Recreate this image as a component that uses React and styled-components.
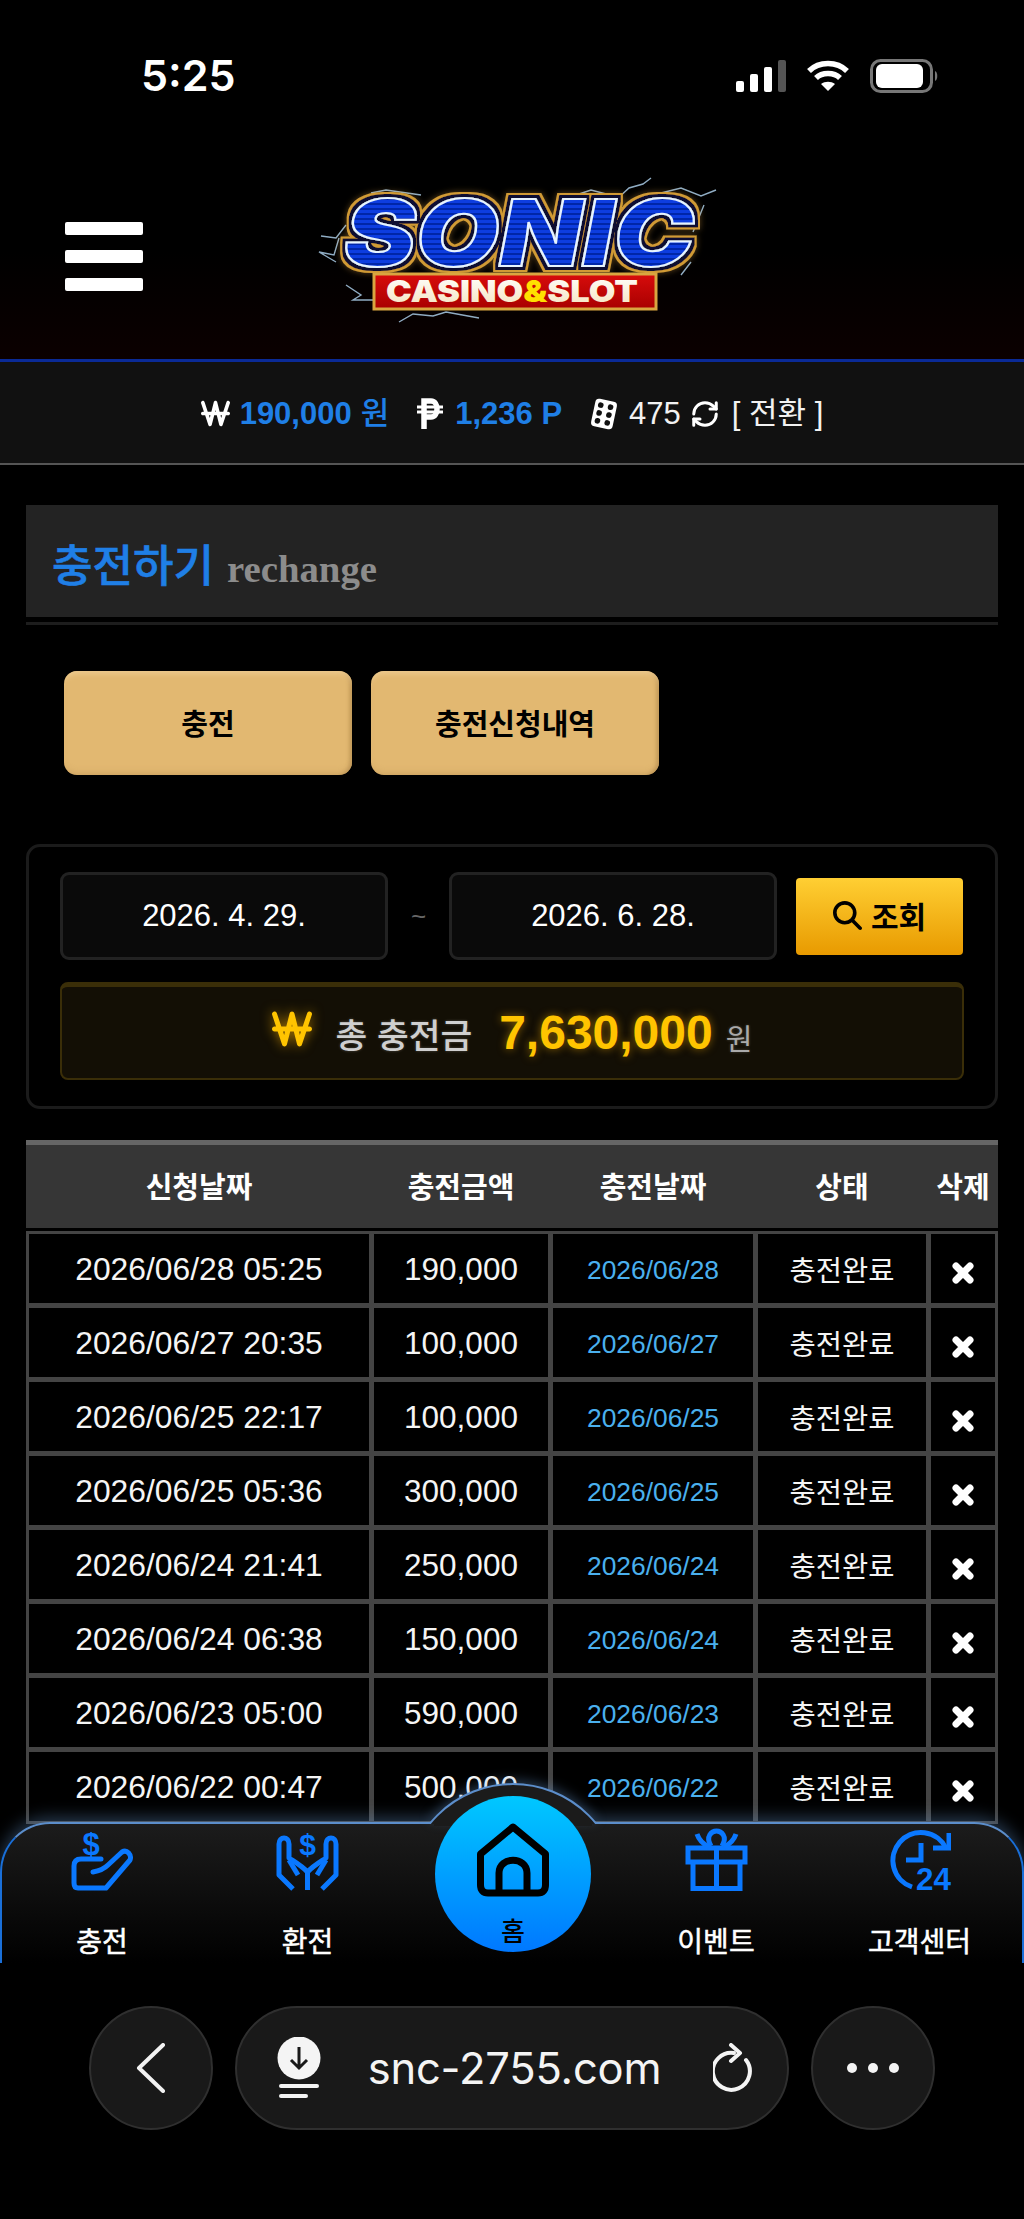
import React from "react";
import styled, { createGlobalStyle } from "styled-components";
import { FaWonSign, FaMagnifyingGlass } from "react-icons/fa6";
import { RefreshCw } from "lucide-react";

const SANS = `"Liberation Sans", "Noto Sans CJK KR", sans-serif`;

const GlobalStyle = createGlobalStyle`
  html, body { margin: 0; padding: 0; background: #000; }
  * { box-sizing: border-box; }
  body { font-family: ${SANS}; color: #fff; }
`;

const Page = styled.div`
  width: 1024px;
  height: 2219px;
  overflow: hidden;
  display: flex;
  flex-direction: column;
  background: #000;
`;
const WebView = styled.div`
  position: relative;
  height: 1963px;
  flex: none;
  overflow: hidden;
`;

/* status bar + logo header */
const Header = styled.header`
  height: 359px;
  background: linear-gradient(#000 70%, #0b0000 100%);
`;
const StatusBar = styled.div`
  height: 140px;
  padding: 50px 85px 0 141px;
  display: flex;
  justify-content: space-between;
  align-items: flex-start;
`;
const Time = styled.div`
  font-family: Inter, sans-serif;
  font-weight: 600;
  font-size: 43px;
  line-height: 50px;
`;
const StatusIcons = styled.div`
  display: flex;
  align-items: center;
  gap: 20px;
  padding-top: 9px;
`;
const TopRow = styled.div`
  display: grid;
  grid-template-columns: 1fr 420px 1fr;
  align-items: start;
`;
const MenuButton = styled.div`
  margin: 82px 0 0 65px;
  width: 78px;
  display: flex;
  flex-direction: column;
  gap: 15px;
`;
const MenuBar = styled.span`
  height: 13px;
  background: #fff;
  border-radius: 2px;
`;
const Logo = styled.svg`
  display: block;
  margin-top: 30px;
`;

/* balance strip */
const Stats = styled.div`
  height: 106px;
  border-top: 3px solid #0a2a96;
  border-bottom: 2px solid #555;
  background: #111;
  display: flex;
  align-items: center;
  justify-content: center;
  font-size: 31px;
  line-height: 40px;
  padding-top: 2px;
`;
const StatIcon = styled.span`
  display: inline-flex;
  color: #fff;
  margin-right: ${(p) => p.$gap || 10}px;
`;
const StatValue = styled.b`
  color: #1f7fe6;
  font-weight: 700;
  margin-right: ${(p) => p.$gap || 28}px;
  white-space: nowrap;
`;
const StatUnit = styled.span`
  font-weight: 500;
  margin-left: 9px;
`;
const StatText = styled.span`
  color: #f2f2f2;
  white-space: nowrap;
  margin-right: ${(p) => p.$gap || 0}px;
`;

/* page body */
const Content = styled.main`
  padding: 40px 26px 0;
`;
const TitleWrap = styled.div`
  padding-bottom: 5px;
  border-bottom: 3px solid #1d1d1d;
`;
const TitleBox = styled.div`
  height: 112px;
  background: #232323;
  padding: 22px 26px 0;
  display: flex;
  align-items: center;
  gap: 13px;
`;
const TitleMain = styled.h1`
  margin: 0;
  font-size: 44px;
  font-weight: 500;
  -webkit-text-stroke: 0.6px #1f7fe6;
  color: #1f7fe6;
  white-space: nowrap;
  position: relative;
  top: -9px;
`;
const TitleSub = styled.span`
  font-family: "Liberation Serif", serif;
  font-weight: 700;
  font-size: 38.8px;
  color: #8c8c8c;
  position: relative;
  top: -4px;
`;
const Tabs = styled.div`
  display: flex;
  gap: 19px;
  padding: 46px 0 0 38px;
`;
const TabButton = styled.div`
  width: 288px;
  height: 104px;
  border-radius: 13px;
  background: #e2b871;
  box-shadow: inset 0 6px 6px -4px #f1d097, inset 0 -6px 6px -3px #b8905250,
    inset -4px 0 4px -2px #b89052;
  display: flex;
  align-items: center;
  justify-content: center;
  color: #000;
  font-size: 29px;
  font-weight: 700;
  padding-bottom: 2px;
`;
const SearchPanel = styled.section`
  margin-top: 69px;
  height: 265px;
  border: 3px solid #1b1b1b;
  border-radius: 14px;
  padding: 25px 31px;
`;
const SearchRow = styled.div`
  display: flex;
  align-items: center;
`;
const DateField = styled.div`
  width: 328px;
  height: 88px;
  background: #0a0a0a;
  border: 3px solid #222;
  border-radius: 9px;
  display: flex;
  align-items: center;
  justify-content: center;
  font-size: 31px;
`;
const Tilde = styled.span`
  width: 61px;
  text-align: center;
  color: #666;
  font-size: 26px;
`;
const SearchButton = styled.div`
  width: 167px;
  height: 77px;
  margin-left: 19px;
  border-radius: 4px;
  background: linear-gradient(#ffcf33, #e89a00);
  color: #000;
  font-size: 30px;
  font-weight: 700;
  display: flex;
  align-items: center;
  justify-content: center;
  gap: 9px;
  padding-bottom: 2px;
`;
const TotalBar = styled.div`
  margin-top: 22px;
  width: 904px;
  height: 98px;
  border: 2px solid #3a2e08;
  border-top-width: 5px;
  border-radius: 8px;
  background: #130f05;
  display: flex;
  align-items: center;
  justify-content: center;
`;
const WonMark = styled.span`
  display: inline-flex;
  color: #ffc400;
  margin: -8px 24px 0 0;
  filter: drop-shadow(0 0 6px #ffb40099);
`;
const TotalLabel = styled.span`
  color: #cfcfcf;
  font-size: 34.5px;
  font-weight: 500;
  margin-right: 27px;
  text-shadow: 0 0 3px #ffffff40;
`;
const TotalValue = styled.b`
  color: #ffc400;
  font-size: 48px;
  text-shadow: 0 0 8px #ffb40080;
`;
const TotalUnit = styled.span`
  color: #aaa;
  font-size: 29px;
  margin: 8px 0 0 13px;
  text-shadow: 0 0 3px #ffffff40;
`;

/* history table */
const COLUMNS = "340px 174px 200px 168px 64px";

const TableHead = styled.div`
  margin-top: 31px;
  height: 88px;
  border-top: 5px solid #666;
  background: #363636;
  padding: 0 3px 4px;
  display: grid;
  grid-template-columns: ${COLUMNS};
  column-gap: 5px;
  align-items: center;
  text-align: center;
  font-size: 29px;
  font-weight: 700;
`;
const TableBody = styled.div`
  margin-top: 3px;
  padding: 3px;
  background: #444;
  display: grid;
  grid-template-columns: ${COLUMNS};
  grid-auto-rows: 69px;
  gap: 5px;
`;
const Cell = styled.div`
  background: #000;
  display: flex;
  align-items: center;
  justify-content: center;
  white-space: nowrap;
  font-size: ${(p) => p.$size || 31.5}px;
  color: ${(p) => p.$color || "#f5f5f5"};
  padding-top: ${(p) => p.$drop ?? 1}px;
`;

/* bottom navigation */
const BottomNav = styled.nav`
  position: absolute;
  left: 0;
  right: 0;
  bottom: 0;
  height: 141px;
  border: 2px solid #1a6fd8;
  border-top-color: #5c8ecb;
  border-bottom: none;
  border-radius: 50px 50px 0 0;
  background: linear-gradient(#1c1c1c, #000);
  box-shadow: 0 -5px 16px rgba(110, 160, 220, 0.35);
  display: grid;
  grid-template-columns: repeat(5, 1fr);
`;
const NavItem = styled.div`
  display: flex;
  flex-direction: column;
  align-items: center;
  padding-top: 4px;
  font-size: 28px;
  font-weight: 400;
  -webkit-text-stroke: 0.5px #fff;
  gap: 32px;
  line-height: 40px;
  white-space: nowrap;
  margin-left: ${(p) => p.$shift || 0}px;
`;
/* round bump over the bar: a clipped circle */
const Bump = styled.div`
  position: absolute;
  left: 426px;
  top: -41px;
  width: 170px;
  height: 41px;
  overflow: hidden;
  filter: drop-shadow(0 -3px 6px rgba(110, 160, 220, 0.35));
`;
const BumpCircle = styled.div`
  width: 216px;
  height: 216px;
  margin-left: -23px;
  border-radius: 50%;
  background: #1b1b1b;
  border: 2px solid #5c8ecb;
`;
const BumpFill = styled.div`
  position: absolute;
  left: 432px;
  top: -2px;
  width: 158px;
  height: 4px;
  background: #1b1b1b;
`;
const HomeButton = styled.div`
  position: absolute;
  left: 433px;
  top: -28px;
  width: 156px;
  height: 156px;
  border-radius: 50%;
  background: linear-gradient(#00c8ff, #0078ff);
  color: #000;
  font-size: 26px;
  font-weight: 500;
  display: flex;
  flex-direction: column;
  align-items: center;
  padding-top: 27px;
  line-height: 30px;
  gap: 20px;
`;

/* browser chrome */
const BrowserBar = styled.div`
  display: flex;
  justify-content: center;
  gap: 22px;
  padding-top: 43px;
`;
const RoundButton = styled.div`
  width: 124px;
  height: 124px;
  border-radius: 50%;
  background: #191919;
  border: 2px solid #2f2f2f;
  display: flex;
  align-items: center;
  justify-content: center;
`;
const AddressPill = styled.div`
  width: 554px;
  height: 124px;
  border-radius: 62px;
  background: #191919;
  border: 2px solid #2f2f2f;
  display: flex;
  align-items: center;
  justify-content: space-between;
  padding: 0 32px 0 39px;
`;
const UrlText = styled.span`
  font-family: Inter, sans-serif;
  font-size: 43.5px;
  letter-spacing: -0.2px;
  color: #f4f4f4;
  margin-right: 6px;
`;

const ROWS = [
  ["2026/06/28 05:25", "190,000", "2026/06/28"],
  ["2026/06/27 20:35", "100,000", "2026/06/27"],
  ["2026/06/25 22:17", "100,000", "2026/06/25"],
  ["2026/06/25 05:36", "300,000", "2026/06/25"],
  ["2026/06/24 21:41", "250,000", "2026/06/24"],
  ["2026/06/24 06:38", "150,000", "2026/06/24"],
  ["2026/06/23 05:00", "590,000", "2026/06/23"],
  ["2026/06/22 00:47", "500,000", "2026/06/22"],
];

const HEADS = ["신청날짜", "충전금액", "충전날짜", "상태", "삭제"];

const SignalIcon = () => (
  <svg width="50" height="32" viewBox="0 0 50 32">
    <rect x="0" y="21" width="8" height="11" rx="2" fill="#fff" />
    <rect x="14" y="14" width="8" height="18" rx="2" fill="#fff" />
    <rect x="28" y="7" width="8" height="25" rx="2" fill="#fff" />
    <rect x="42" y="0" width="8" height="32" rx="2" fill="#555" />
  </svg>
);

const WifiIcon = () => (
  <svg width="44" height="32" viewBox="0 0 44 32" fill="none" stroke="#fff" strokeWidth="5.5">
    <path d="M3 11 C13 1 31 1 41 11" />
    <path d="M10 18 C16 12 28 12 34 18" />
    <path d="M22 31 L15 24 C19 21 25 21 29 24 Z" fill="#fff" stroke="none" />
  </svg>
);

const BatteryIcon = () => (
  <svg width="69" height="34" viewBox="0 0 69 34">
    <rect x="1.5" y="1.5" width="60" height="31" rx="9" fill="none" stroke="#777" strokeWidth="3" />
    <rect x="6" y="5" width="47" height="24" rx="6" fill="#fff" />
    <path d="M65 12 C68 13 68 21 65 22 Z" fill="#777" />
  </svg>
);

const SonicLogo = () => (
  <Logo width="420" height="160" viewBox="301 170 420 160">
    <defs>
      <pattern id="scan" width="6" height="5" patternUnits="userSpaceOnUse">
        <rect width="6" height="5" fill="#0b3ce0" />
        <rect y="3" width="6" height="2" fill="#0626a8" />
      </pattern>
      <linearGradient id="ban" x1="0" y1="0" x2="0" y2="1">
        <stop offset="0" stopColor="#d80c0c" />
        <stop offset="1" stopColor="#a80000" />
      </linearGradient>
      <linearGradient id="cream" x1="0" y1="0" x2="0" y2="1">
        <stop offset="0" stopColor="#ffffff" />
        <stop offset="1" stopColor="#f5e3bd" />
      </linearGradient>
      <filter id="soft" x="-10%" y="-10%" width="120%" height="120%">
        <feGaussianBlur stdDeviation="0.7" />
      </filter>
      {/* dark and gold rims around the wordmark, so it stays one text */}
      <filter id="rim" x="-5%" y="-15%" width="110%" height="130%">
        <feMorphology in="SourceAlpha" operator="dilate" radius="3" result="inner" />
        <feFlood floodColor="#0a0f33" />
        <feComposite in2="inner" operator="in" result="dark" />
        <feMorphology in="SourceAlpha" operator="dilate" radius="5" result="outer" />
        <feFlood floodColor="#d09a34" />
        <feComposite in2="outer" operator="in" result="gold" />
        <feGaussianBlur in="outer" stdDeviation="3" result="blur" />
        <feFlood floodColor="#ffb84a" floodOpacity="0.35" />
        <feComposite in2="blur" operator="in" result="glow" />
        <feMerge>
          <feMergeNode in="glow" />
          <feMergeNode in="gold" />
          <feMergeNode in="dark" />
          <feMergeNode in="SourceGraphic" />
        </feMerge>
      </filter>
    </defs>
    <g fill="none" stroke="#a9cbe6" strokeWidth="1.4" opacity="0.85" filter="url(#soft)">
      <path d="M572 196 L590 190 L605 194 L615 200 L628 188 L642 184 L650 178" />
      <path d="M370 193 L385 190 L420 195" />
      <path d="M660 193 L680 188 L700 196 L715 190" />
      <path d="M345 225 L335 238 L320 236 M338 238 L333 255 L318 252 L335 262" />
      <path d="M345 285 L360 295 L352 300 L372 300" />
      <path d="M398 322 L412 314 L432 316 L445 312 L478 318" />
      <path d="M703 205 L692 232 M690 262 L680 275" />
    </g>
    <text
      x="343"
      y="266"
      textLength="350"
      lengthAdjust="spacingAndGlyphs"
      fontFamily="Inter"
      fontWeight="900"
      fontStyle="italic"
      fontSize="92"
      fill="url(#scan)"
      stroke="#e6f3ff"
      strokeWidth="2"
      filter="url(#rim)"
    >
      SONIC
    </text>
    <rect x="373" y="274" width="282" height="35" fill="url(#ban)" stroke="#d9a640" strokeWidth="3" />
    <text
      x="385"
      y="302"
      textLength="252"
      lengthAdjust="spacingAndGlyphs"
      fontFamily="Inter"
      fontWeight="900"
      fontSize="30"
      fill="url(#cream)"
    >
      CASINO<tspan fill="#ffe000">&amp;</tspan>SLOT
    </text>
  </Logo>
);

const DiceIcon = () => (
  <svg width="30" height="34" viewBox="0 0 30 34">
    <g transform="rotate(12 15 17)">
      <rect x="4" y="3" width="22" height="28" rx="4" fill="#fff" />
      {[10, 20].map((x) =>
        [9, 17, 25].map((y) => <circle key={`${x}-${y}`} cx={x} cy={y} r="2.8" fill="#111" />)
      )}
    </g>
  </svg>
);

const PesoIcon = () => (
  <svg width="26" height="32" viewBox="0 0 26 32" fill="none" stroke="#fff">
    <path d="M7 31 V3 H14 C22 3 22 19 14 19 H7" strokeWidth="5.5" />
    <path d="M0 9 H26 M0 14 H26" strokeWidth="3" />
  </svg>
);

const DeleteIcon = () => (
  <svg width="24" height="24" viewBox="0 0 24 24" stroke="#fff" strokeWidth="7" strokeLinecap="round">
    <path d="M5 5 L19 19 M19 5 L5 19" />
  </svg>
);

const ChargeIcon = () => (
  <svg width="63" height="63" viewBox="0 0 63 63" fill="none" stroke="#0a78ff" strokeWidth="5" strokeLinecap="round" strokeLinejoin="round">
    <path d="M30 31 H10 C5 31 3 34 3 38 V55 C3 58 4 60 7 60 H35 L59 32 C61 27 56 21 51 24 L37 37 C33 41 28 43 22 44" />
    <text x="20" y="27" textAnchor="middle" fontFamily="Liberation Sans" fontWeight="700" fontSize="31" fill="#0a78ff" stroke="none">$</text>
  </svg>
);

const ExchangeIcon = () => (
  <svg width="63" height="63" viewBox="0 0 63 63" fill="none" stroke="#0a78ff" strokeWidth="5" strokeLinejoin="round">
    <path d="M17 61 L3 47 V16 C3 8 13 8 13 16 V30 C19 34 26 38 31.5 44" />
    <path d="M13 32 L22 47" />
    <g transform="matrix(-1 0 0 1 63 0)">
      <path d="M17 61 L3 47 V16 C3 8 13 8 13 16 V30 C19 34 26 38 31.5 44" />
      <path d="M13 32 L22 47" />
    </g>
    <path d="M31.5 42 V62" />
    <text x="31.5" y="27" textAnchor="middle" fontFamily="Liberation Sans" fontWeight="700" fontSize="30" fill="#0a78ff" stroke="none">$</text>
  </svg>
);

const GiftIcon = () => (
  <svg width="63" height="63" viewBox="0 0 63 63" fill="none" stroke="#0a78ff" strokeWidth="5">
    <path d="M3 34 V20 H60 V34 Z" />
    <path d="M8 34 V60.5 H55 V34" />
    <path d="M31.5 20 V61" />
    <path d="M26 18 C20 8 27 3 31.5 3 C36 3 43 8 37 18" />
    <path d="M12 6 C14 12 18 16 24 19 M51 6 C49 12 45 16 39 19" />
  </svg>
);

const SupportIcon = () => (
  <svg width="63" height="63" viewBox="0 0 63 63" fill="none" stroke="#0a78ff" strokeWidth="5">
    <path d="M58 20 A28 28 0 1 0 24 59" />
    <path d="M61 5 V20 H45" />
    <path d="M33 15 V32 H18" />
    <text x="28" y="62" fontFamily="Liberation Sans" fontWeight="700" fontSize="31" textLength="35" lengthAdjust="spacingAndGlyphs" fill="#0a78ff" stroke="none">24</text>
  </svg>
);

const HomeIcon = () => (
  <svg width="72" height="74" viewBox="0 0 72 74" fill="none" stroke="#000" strokeWidth="7" strokeLinejoin="round">
    <path d="M3.5 31 L36 4 L68.5 31 V62 C68.5 67 66 70 61 70 H11 C6 70 3.5 67 3.5 62 Z" />
    <path d="M22 70 V50 C22 33 50 33 50 50 V70" />
  </svg>
);

const BackIcon = () => (
  <svg width="30" height="50" viewBox="0 0 30 50" fill="none" stroke="#f2f2f2" strokeWidth="4" strokeLinecap="round" strokeLinejoin="round">
    <path d="M27 2 L3 25 L27 48" />
  </svg>
);

const DownloadIcon = () => (
  <svg width="46" height="62" viewBox="0 0 46 62">
    <circle cx="23" cy="21" r="21.5" fill="#f4f4f4" />
    <path d="M23 10 V30 M15 23 L23 31 L31 23" fill="none" stroke="#191919" strokeWidth="3" />
    <rect x="3" y="47" width="40" height="4" rx="2" fill="#f4f4f4" />
    <rect x="3" y="57" width="29" height="4" rx="2" fill="#f4f4f4" />
  </svg>
);

const ReloadIcon = () => (
  <svg width="42" height="50" viewBox="0 0 42 50" fill="none" stroke="#f4f4f4" strokeWidth="4" strokeLinecap="round" strokeLinejoin="round">
    <path d="M33 17 A18.5 18.5 0 1 1 21 10" />
    <path d="M18 2 L27 10 L18 18" />
  </svg>
);

const DotsIcon = () => (
  <svg width="54" height="12" viewBox="0 0 54 12" fill="#f4f4f4">
    <circle cx="6" cy="6" r="5" />
    <circle cx="27" cy="6" r="5" />
    <circle cx="48" cy="6" r="5" />
  </svg>
);

const App = () => {
  return (
    <Page>
      <GlobalStyle />
      <WebView>
        <Header>
          <StatusBar>
            <Time>5:25</Time>
            <StatusIcons>
              <SignalIcon />
              <WifiIcon />
              <BatteryIcon />
            </StatusIcons>
          </StatusBar>
          <TopRow>
            <MenuButton>
              <MenuBar />
              <MenuBar />
              <MenuBar />
            </MenuButton>
            <SonicLogo />
          </TopRow>
        </Header>

        <Stats>
          <StatIcon>
            <FaWonSign size={29} />
          </StatIcon>
          <StatValue>
            190,000<StatUnit>원</StatUnit>
          </StatValue>
          <StatIcon $gap={12}>
            <PesoIcon />
          </StatIcon>
          <StatValue $gap={27}>1,236 P</StatValue>
          <StatIcon $gap={10}>
            <DiceIcon />
          </StatIcon>
          <StatText $gap={9}>475</StatText>
          <StatIcon $gap={12}>
            <RefreshCw size={30} strokeWidth={2.4} />
          </StatIcon>
          <StatText>[ 전환 ]</StatText>
        </Stats>

        <Content>
          <TitleWrap>
            <TitleBox>
              <TitleMain>충전하기</TitleMain>
              <TitleSub>rechange</TitleSub>
            </TitleBox>
          </TitleWrap>

          <Tabs>
            <TabButton>충전</TabButton>
            <TabButton>충전신청내역</TabButton>
          </Tabs>

          <SearchPanel>
            <SearchRow>
              <DateField>2026. 4. 29.</DateField>
              <Tilde>~</Tilde>
              <DateField>2026. 6. 28.</DateField>
              <SearchButton>
                <FaMagnifyingGlass size={29} />
                조회
              </SearchButton>
            </SearchRow>
            <TotalBar>
              <WonMark>
                <FaWonSign size={40} />
              </WonMark>
              <TotalLabel>총 충전금</TotalLabel>
              <TotalValue>7,630,000</TotalValue>
              <TotalUnit>원</TotalUnit>
            </TotalBar>
          </SearchPanel>

          <TableHead>
            {HEADS.map((h) => (
              <span key={h}>{h}</span>
            ))}
          </TableHead>
          <TableBody>
            {ROWS.map(([requested, amount, charged]) => (
              <React.Fragment key={requested}>
                <Cell $size={31.8}>{requested}</Cell>
                <Cell>{amount}</Cell>
                <Cell $size={26.4} $color="#4ab0ee" $drop={3}>
                  {charged}
                </Cell>
                <Cell $size={28.5} $drop={0}>충전완료</Cell>
                <Cell $drop={8}>
                  <DeleteIcon />
                </Cell>
              </React.Fragment>
            ))}
          </TableBody>
        </Content>

        <BottomNav>
          <NavItem $shift={-4}>
            <ChargeIcon />
            충전
          </NavItem>
          <NavItem $shift={-1}>
            <ExchangeIcon />
            환전
          </NavItem>
          <span />
          <NavItem>
            <GiftIcon />
            이벤트
          </NavItem>
          <NavItem $shift={-1}>
            <SupportIcon />
            고객센터
          </NavItem>
          <Bump>
            <BumpCircle />
          </Bump>
          <BumpFill />
          <HomeButton>
            <HomeIcon />홈
          </HomeButton>
        </BottomNav>
      </WebView>

      <BrowserBar>
        <RoundButton>
          <BackIcon />
        </RoundButton>
        <AddressPill>
          <DownloadIcon />
          <UrlText>snc-2755.com</UrlText>
          <ReloadIcon />
        </AddressPill>
        <RoundButton>
          <DotsIcon />
        </RoundButton>
      </BrowserBar>
    </Page>
  );
};

export default App;
